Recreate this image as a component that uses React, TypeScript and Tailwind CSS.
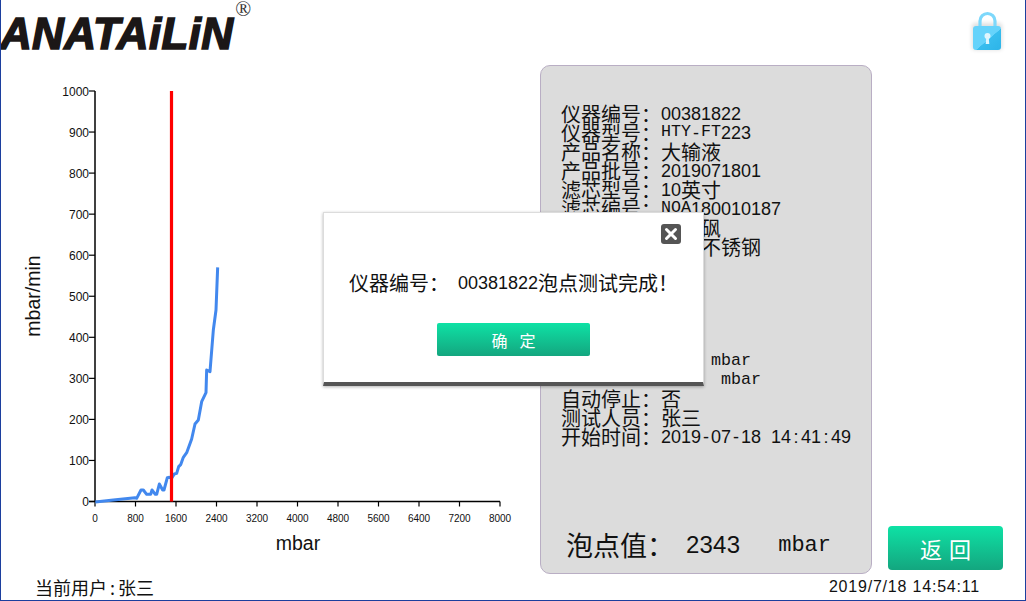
import { X } from 'lucide-react'

const cjk = "font-['Noto_Sans_CJK_SC',sans-serif]"
const sans = "font-['Liberation_Sans',sans-serif]"
const mono = "font-['Liberation_Mono',monospace]"

const rows = [
  '仪器编号：00381822',
  '仪器型号：HTY-FT223',
  '产品名称：大输液',
  '产品批号：2019071801',
  '滤芯型号：10英寸',
  '滤芯编号：NOA180010187',
  '滤芯材质：聚醚砜',
  '外壳材质：316L不锈钢',
  '',
  '',
  '',
  '',
  '',
  '               mbar',
  '                mbar',
  '自动停止：否',
  '测试人员：张三',
  '开始时间：2019-07-18 14:41:49',
]

// reference font: full width han, half width latin, both on a 10px grid
function Cells({ text }: { text: string }) {
  return (
    <>
      {Array.from(text).map((c, i) => {
        if (/[\u3000-\u9fff\uff00-\uffef]/.test(c)) {
          return <span key={i} className={`w-[20px] shrink-0 text-center text-[20px] ${cjk}`}>{c}</span>
        }
        if (/[A-Za-z]/.test(c)) {
          return <span key={i} className={`w-[10px] shrink-0 text-center text-[16.7px] ${mono}`}>{c}</span>
        }
        return <span key={i} className={`w-[10px] shrink-0 text-center text-[18px] ${sans}`}>{c}</span>
      })}
    </>
  )
}

const xLabels = [0, 800, 1600, 2400, 3200, 4000, 4800, 5600, 6400, 7200, 8000]
const yLabels = [0, 100, 200, 300, 400, 500, 600, 700, 800, 900, 1000]

const curve = [
  [46, 726], [100, 720], [165, 713], [170, 715], [183, 690], [190, 690], [200, 703], [212, 703],
  [216, 690], [226, 703], [230, 703], [238, 672], [248, 690], [252, 690], [262, 653], [268, 652],
  [275, 655], [283, 642], [290, 640], [296, 620], [302, 614], [310, 592], [320, 578], [335, 537],
  [345, 492], [355, 480], [365, 425], [378, 398], [380, 330], [390, 335], [400, 210], [408, 150], [413, 22],
]
  .map(([x, y]) => `${80 + x / 3},${260 + y / 3}`)
  .join(' ')

function Chart() {
  const left = 95
  const right = 500
  const top = 91
  const bottom = 501.5
  return (
    <svg viewBox="1 65 539 509" className="h-[509px] w-[539px] shrink-0">
      <line x1={left} y1={top} x2={left} y2={bottom} stroke="#000" strokeWidth="1.5" />
      <line x1={left - 6} y1={bottom} x2={right} y2={bottom} stroke="#000" strokeWidth="1.5" />
      {yLabels.map((v) => {
        const y = bottom - (v / 1000) * (bottom - top)
        return (
          <g key={v}>
            <line x1={left - 6} y1={y} x2={left} y2={y} stroke="#000" strokeWidth="1.2" />
            <text x={left - 6} y={y + 4.5} textAnchor="end" fontSize="12" fontFamily="Liberation Sans" fill="#111">
              {v}
            </text>
          </g>
        )
      })}
      {xLabels.map((v) => {
        const x = left + (v / 8000) * (right - left)
        return (
          <g key={v}>
            <line x1={x} y1={bottom} x2={x} y2={bottom + 5} stroke="#000" strokeWidth="1.2" />
            <text x={x} y={bottom + 20} textAnchor="middle" fontSize="10" fontFamily="Liberation Sans" fill="#111">
              {v}
            </text>
          </g>
        )
      })}
      <polyline points={curve} fill="none" stroke="#4288ee" strokeWidth="3" strokeLinejoin="round" />
      <line x1="171.5" y1={top} x2="171.5" y2={bottom} stroke="#ff0000" strokeWidth="3.2" />
      <text x="298" y="550" textAnchor="middle" fontSize="19.5" fontFamily="Liberation Sans" fill="#111">
        mbar
      </text>
      <text
        transform="translate(40 296) rotate(-90)"
        textAnchor="middle"
        fontSize="19.5"
        fontFamily="Liberation Sans"
        fill="#111"
      >
        mbar/min
      </text>
    </svg>
  )
}

function LockIcon() {
  return (
    <svg width="42" height="48" viewBox="0 0 42 48" className="blur-[0.5px]">
      <defs>
        <linearGradient id="lockBody" x1="0" y1="0" x2="1" y2="1">
          <stop offset="0.55" stopColor="#66d3fb" />
          <stop offset="0.56" stopColor="#38bdee" />
          <stop offset="1" stopColor="#2db4e8" />
        </linearGradient>
      </defs>
      <rect x="5" y="15" width="30" height="27" rx="3" fill="#000" opacity="0.13" className="blur-[2px]" />
      <path d="M13 21v-8a7.5 7.5 0 0 1 15 0v8" fill="none" stroke="#7dd8fb" strokeWidth="3.2" />
      <rect x="6" y="18" width="28" height="24" rx="3" fill="url(#lockBody)" />
      <circle cx="20.5" cy="28" r="3" fill="#dff5fd" />
      <path d="M19.3 29h2.4l.6 7h-3.6z" fill="#dff5fd" />
    </svg>
  )
}

export default function App() {
  return (
    <div className="relative flex h-[601px] w-[1026px] flex-col overflow-hidden border-x border-b border-[#1c3f9e] bg-white text-[#111]">
      {/* Header */}
      <header className="flex h-[65px] shrink-0 items-start justify-between">
        <div className="flex items-start">
          <span
            className={`mt-[8px] -ml-px text-[44px] leading-[52px] font-bold italic tracking-[0.3px] text-[#1b1717] [-webkit-text-stroke:1.6px_#1b1717] ${sans}`}
          >
            ANATAiLiN
          </span>
          <span className="mt-[-3px] ml-[2px] font-['Liberation_Serif',serif] text-[21px] leading-[24px] text-[#333]">®</span>
        </div>
        <div className="mt-[8px] mr-[16px]">
          <LockIcon />
        </div>
      </header>

      {/* Main */}
      <main className="flex h-[509px] shrink-0">
        <Chart />
        <section className="flex w-[332px] shrink-0 flex-col justify-between rounded-[10px] border border-[#b9aec4] bg-[#dcdcdc] pt-[38px] pb-[10px] pl-[20px]">
          <div>
            {rows.map((row, i) => (
              <div key={i} className="flex h-[19.05px] items-center leading-none whitespace-pre">
                <Cells text={row} />
              </div>
            ))}
          </div>
          <div className="flex items-center pl-[5px] whitespace-pre">
            <span className={`text-[27px] leading-[36px] ${cjk}`}>泡点值：</span>
            <span className={`ml-[12px] text-[24px] tracking-[0.2px] ${sans}`}>2343</span>
            <span className={`ml-[38px] text-[22px] ${mono}`}>mbar</span>
          </div>
        </section>
        <div className="flex flex-1 items-end pb-[4px] pl-[16px]">
          <button
            className={`flex h-[44px] w-[115px] items-center justify-center gap-[7px] rounded-[4px] bg-gradient-to-b from-[#0de2a5] to-[#13a67f] text-[22px] text-white ${cjk}`}
          >
            <span>返</span>
            <span>回</span>
          </button>
        </div>
      </main>

      {/* Footer */}
      <footer className="flex flex-1 items-center justify-between pr-[45px] pl-[34px]">
        <span className={`text-[18px] leading-none ${cjk}`}>
          当前用户<span className="mx-[3px]">:</span>张三
        </span>
        <span className={`text-[16px] tracking-[0.8px] ${sans}`}>2019/7/18 14:54:11</span>
      </footer>

      {/* Result dialog */}
      <div className="absolute top-[212px] left-[322px] flex h-[174px] w-[381px] flex-col items-center border border-b-[4px] border-[#dcdcdc] border-b-[#555] bg-white shadow-[0_1px_3px_rgba(0,0,0,0.3)]">
        <button className="absolute top-[11px] right-[22px] flex h-[20px] w-[20px] items-center justify-center rounded-[3px] bg-[#555] text-white">
          <X size={18} strokeWidth={4} />
        </button>
        <div className="mt-[60px] flex h-[20px] w-full items-center pl-[25px] whitespace-pre">
          <Cells text="仪器编号：" />
          <span className="w-[9px]" />
          <Cells text="00381822泡点测试完成！" />
        </div>
        <button
          className={`mt-[30px] flex h-[33px] w-[153px] items-center justify-center gap-[12px] rounded-[2px] bg-gradient-to-b from-[#0de2a5] to-[#13a67f] text-[16px] text-white ${cjk}`}
        >
          <span>确</span>
          <span>定</span>
        </button>
      </div>
    </div>
  )
}
